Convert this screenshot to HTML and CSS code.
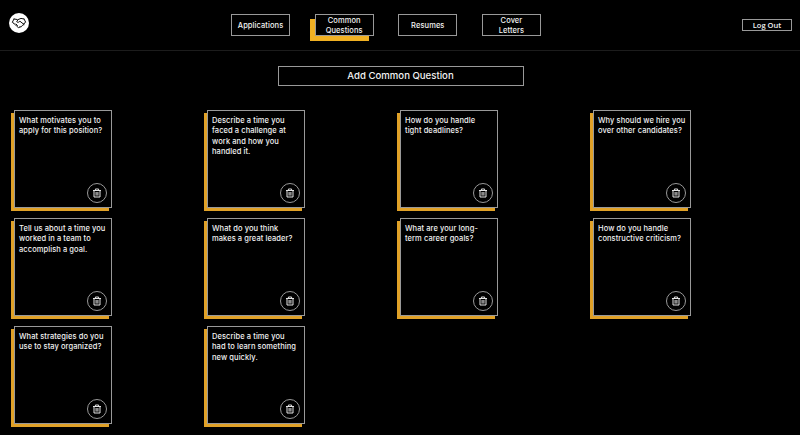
FILE: index.html
```html
<!DOCTYPE html>
<html lang="en">
<head>
<meta charset="utf-8">
<title>Common Questions</title>
<link rel="stylesheet" href="styles.css">
</head>
<body>
<svg width="0" height="0" class="symbols">
  <symbol id="trash" viewBox="0 0 10 10">
    <path d="M1 2.500h8M3.400 2.200V1h3.200v1.200M2 2.600v6.400h6V2.600M4.100 4v3.600M5.900 4v3.600" fill="none" stroke="#e4e4e4" stroke-width="1"/>
  </symbol>
</svg>
<header class="header">
  <a class="logo" href="#" aria-label="Home">
    <svg viewBox="0 0 20 20" fill="none" stroke="#111" stroke-width="1" stroke-linejoin="round" stroke-linecap="round">
      <path d="M5 6 3.300 9.300l1.500 1M5 6l3.200.5M15 6l1.700 3.200-1.600 1.200M15 6l-3-.6-3 1.200-1.300 2.200c1 .9 2.200.5 3.200-.6l4 3.200M4.800 10.300l2.600 2.600 2 1.700 1.500-.6M10.900 14l1.500-.3.8-1.200 1.500-.7.4-1.400M7 11l1.500 1.500"/>
    </svg>
  </a>
  <nav class="nav">
    <a class="nav-item" href="#">Applications</a>
    <a class="nav-item active" href="#">Common<br>Questions</a>
    <a class="nav-item" href="#">Resumes</a>
    <a class="nav-item" href="#">Cover<br>Letters</a>
  </nav>
  <button class="logout">Log Out</button>
</header>
<main>
  <button class="add">Add Common Question</button>
  <section class="grid">
    <article class="card"><p>What motivates you to<br>apply for this position?</p><button class="delete" aria-label="Delete"><svg><use href="#trash"/></svg></button></article>
    <article class="card"><p>Describe a time you<br>faced a challenge at<br>work and how you<br>handled it.</p><button class="delete" aria-label="Delete"><svg><use href="#trash"/></svg></button></article>
    <article class="card"><p>How do you handle<br>tight deadlines?</p><button class="delete" aria-label="Delete"><svg><use href="#trash"/></svg></button></article>
    <article class="card"><p>Why should we hire you<br>over other candidates?</p><button class="delete" aria-label="Delete"><svg><use href="#trash"/></svg></button></article>
    <article class="card"><p>Tell us about a time you<br>worked in a team to<br>accomplish a goal.</p><button class="delete" aria-label="Delete"><svg><use href="#trash"/></svg></button></article>
    <article class="card"><p>What do you think<br>makes a great leader?</p><button class="delete" aria-label="Delete"><svg><use href="#trash"/></svg></button></article>
    <article class="card"><p>What are your long-<br>term career goals?</p><button class="delete" aria-label="Delete"><svg><use href="#trash"/></svg></button></article>
    <article class="card"><p>How do you handle<br>constructive criticism?</p><button class="delete" aria-label="Delete"><svg><use href="#trash"/></svg></button></article>
    <article class="card"><p>What strategies do you<br>use to stay organized?</p><button class="delete" aria-label="Delete"><svg><use href="#trash"/></svg></button></article>
    <article class="card"><p>Describe a time you<br>had to learn something<br>new quickly.</p><button class="delete" aria-label="Delete"><svg><use href="#trash"/></svg></button></article>
  </section>
</main>
</body>
</html>
```
FILE: styles.css
```css
* { box-sizing: border-box; }
body {
  margin: 0;
  height: 435px;
  overflow: hidden;
  background: #000;
  color: #f2f2f2;
  font-family: Inter, "Liberation Sans", sans-serif;
  font-weight: 500;
}
.symbols { display: block; position: absolute; }
button { padding: 0; background: #000; color: inherit; font: inherit; }
.header {
  display: grid;
  grid-template-columns: 231px 310px 1fr;
  height: 51px;
  border-bottom: 1px solid #1c1c1c;
}
.logo {
  width: 20px;
  height: 20px;
  margin: 13px 0 0 9px;
  border-radius: 50%;
  background: #fff;
}
.logo svg { display: block; width: 20px; height: 20px; }
.nav { display: flex; justify-content: space-between; padding-top: 14px; }
.nav-item {
  display: flex;
  align-items: center;
  justify-content: center;
  width: 59px;
  height: 22px;
  padding-top: 1px;
  border: 1px solid #999;
  background: #000;
  color: inherit;
  font-size: 7.500px;
  line-height: 10px;
  letter-spacing: 0.080px;
  text-align: center;
  text-decoration: none;
  white-space: nowrap;
}
.active { box-shadow: -5px 5px 0 #f0b022; }
.logout {
  justify-self: end;
  width: 50px;
  height: 12px;
  margin: 19px 8px 0 0;
  border: 1px solid #999;
  font: 600 7.500px/10px "Open Sans", sans-serif;
}
.add {
  display: block;
  width: 246px;
  height: 20px;
  margin: 15px 0 0 277.500px;
  border: 1px solid #999;
  font-size: 9.600px;
  line-height: 18px;
}
.grid {
  display: grid;
  grid-template-columns: repeat(4, 193px);
  gap: 10px 0;
  padding: 24px 0 0 14px;
}
.card {
  display: flex;
  flex-direction: column;
  justify-content: space-between;
  width: 98px;
  height: 98px;
  padding: 5px 4px 4px;
  border: 1px solid #999;
  box-shadow: -3px 3px 0 #e0a127;
  font-size: 7.500px;
  line-height: 10.330px;
  letter-spacing: 0.080px;
  white-space: nowrap;
}
.card p { margin: 0; }
.delete {
  display: flex;
  align-items: center;
  justify-content: center;
  align-self: flex-end;
  width: 20px;
  height: 20px;
  border: 1px solid #999;
  border-radius: 50%;
}
.delete svg { width: 10px; height: 10px; }
```
